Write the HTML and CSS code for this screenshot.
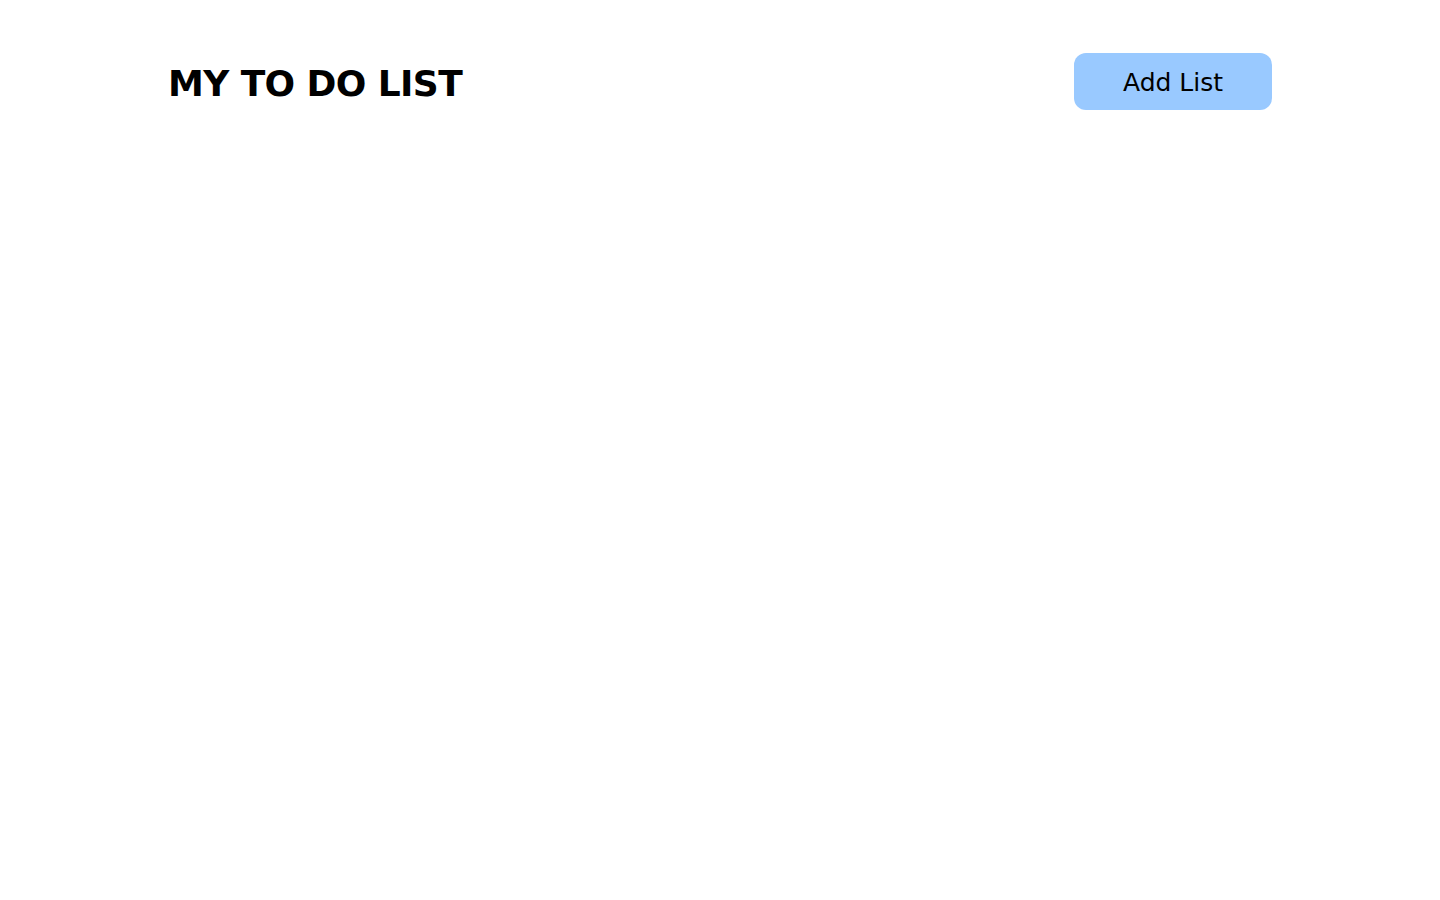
FILE: index.html
```html
<!DOCTYPE html>
<html lang="en">
<head>
<meta charset="utf-8">
<title>My To Do List</title>
<link rel="stylesheet" href="styles.css">
</head>
<body>
<header class="header">
  <h1 class="title">MY TO DO LIST</h1>
  <button class="add-btn" type="button">Add List</button>
</header>
<main class="lists"></main>
</body>
</html>
```

FILE: styles.css
```css
html, body {
  margin: 0;
  padding: 0;
  background: #ffffff;
}
body {
  font-family: "DejaVu Sans", "Open Sans", sans-serif;
  color: #000;
}
.header {
  display: flex;
  align-items: center;
  justify-content: space-between;
  padding: 53px 168px 0 168px;
}
.title {
  margin: 0;
  padding-top: 4px;
  font-size: 36px;
  font-weight: 700;
  line-height: 53px;
  letter-spacing: -0.6px;
}
.add-btn {
  width: 198px;
  height: 57px;
  border: none;
  border-radius: 12px;
  background: #99c9ff;
  color: #000;
  font-family: "DejaVu Sans", "Open Sans", sans-serif;
  font-size: 25px;
  font-weight: 400;
  padding: 2px 0 0 0;
  cursor: pointer;
}
```
